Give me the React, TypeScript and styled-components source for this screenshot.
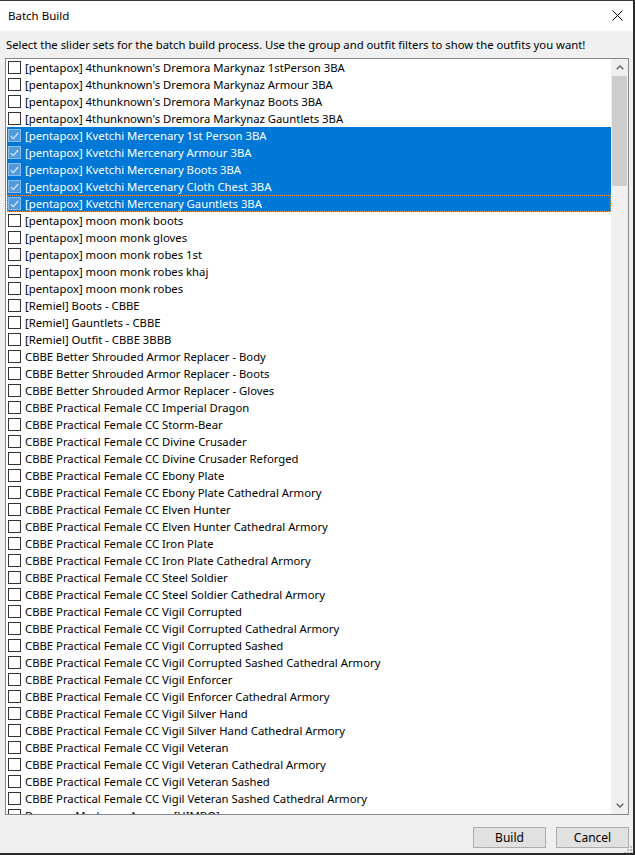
import React from 'react';
import styled, { createGlobalStyle } from 'styled-components';

const GlobalStyle = createGlobalStyle`
  html, body {
    margin: 0;
    padding: 0;
    background: #f0f0f0;
  }
  body {
    font-family: "Segoe UI", "Noto Sans", "Liberation Sans", sans-serif;
    font-size: 11.3px;
    color: #000;
  }
`;

const Window = styled.div`
  position: relative;
  width: 633px;
  height: 852px;
  display: flex;
  flex-direction: column;
  border-top: 1px solid #3a3a3a;
  border-right: 2px solid #2b2b2b;
  border-bottom: 2px solid #2b2b2b;
  background: #f0f0f0;
  overflow: hidden;
`;

const TitleBar = styled.div`
  height: 30px;
  flex: none;
  background: #fff;
  display: flex;
  align-items: center;
  justify-content: space-between;
  padding: 0 10px 0 8px;
`;

const Title = styled.span`
  font-size: 11.5px;
  line-height: 1;
  margin-top: -1px;
`;

const CloseButton = styled.div`
  width: 12px;
  height: 12px;
  display: flex;
  align-items: center;
  justify-content: center;
  margin-top: -2px;
`;

const Body = styled.div`
  flex: 1;
  display: flex;
  flex-direction: column;
  padding: 0 4px 0 5px;
  min-height: 0;
`;

const Description = styled.div`
  height: 27px;
  flex: none;
  display: flex;
  align-items: center;
  padding: 0 0 1px 1px;
  box-sizing: border-box;
  white-space: nowrap;
`;

const ListBox = styled.div`
  height: 755px;
  flex: none;
  display: flex;
  border: 1px solid #828790;
  background: #fff;
  padding: 0 0 0 1px;
`;

const Items = styled.div`
  flex: 1;
  overflow: hidden;
  display: flex;
  flex-direction: column;
`;

const Row = styled.div<{ $selected?: boolean; $focused?: boolean }>`
  height: 17px;
  flex: none;
  display: flex;
  align-items: center;
  gap: 4px;
  padding-left: 1px;
  box-sizing: border-box;
  white-space: nowrap;
  background: ${({ $selected }) => ($selected ? '#0078d7' : 'transparent')};
  color: ${({ $selected }) => ($selected ? '#fff' : '#000')};
  outline: ${({ $focused }) => ($focused ? '1px dotted #f79a3a' : 'none')};
  outline-offset: -1px;
`;

const Box = styled.span<{ $checked?: boolean }>`
  width: 13px;
  height: 13px;
  flex: none;
  box-sizing: border-box;
  border: 1px solid ${({ $checked }) => ($checked ? '#8fbde8' : '#333')};
  background: ${({ $checked }) => ($checked ? '#4f9be0' : '#fff')};
  display: flex;
  align-items: center;
  justify-content: center;
`;

const Label = styled.span`
  line-height: 17px;
`;

const ScrollBar = styled.div`
  width: 17px;
  flex: none;
  background: #f0f0f0;
  display: flex;
  flex-direction: column;
`;

const ArrowButton = styled.div`
  height: 17px;
  flex: none;
  display: flex;
  align-items: center;
  justify-content: center;
`;

const Track = styled.div`
  flex: 1;
  display: flex;
  flex-direction: column;
`;

const Thumb = styled.div`
  height: 110px;
  margin: 0 1px;
  background: #cdcdcd;
`;

const Footer = styled.div`
  flex: 1;
  display: flex;
  justify-content: flex-end;
  align-items: flex-start;
  gap: 10px;
  padding-top: 12px;
`;

const Button = styled.button`
  width: 73px;
  height: 21px;
  box-sizing: border-box;
  border: 1px solid #adadad;
  background: #e1e1e1;
  font-family: inherit;
  font-size: 12px;
  color: #000;
  padding: 0;
`;

const Grip = styled.div`
  position: absolute;
  right: 0;
  bottom: 0;
  width: 10px;
  height: 10px;
`;

const items: string[] = [
  "[pentapox] 4thunknown's Dremora Markynaz 1stPerson 3BA",
  "[pentapox] 4thunknown's Dremora Markynaz Armour 3BA",
  "[pentapox] 4thunknown's Dremora Markynaz Boots 3BA",
  "[pentapox] 4thunknown's Dremora Markynaz Gauntlets 3BA",
  '[pentapox] Kvetchi Mercenary 1st Person 3BA',
  '[pentapox] Kvetchi Mercenary Armour 3BA',
  '[pentapox] Kvetchi Mercenary Boots 3BA',
  '[pentapox] Kvetchi Mercenary Cloth Chest 3BA',
  '[pentapox] Kvetchi Mercenary Gauntlets 3BA',
  '[pentapox] moon monk boots',
  '[pentapox] moon monk gloves',
  '[pentapox] moon monk robes 1st',
  '[pentapox] moon monk robes khaj',
  '[pentapox] moon monk robes',
  '[Remiel] Boots - CBBE',
  '[Remiel] Gauntlets - CBBE',
  '[Remiel] Outfit - CBBE 3BBB',
  'CBBE Better Shrouded Armor Replacer - Body',
  'CBBE Better Shrouded Armor Replacer - Boots',
  'CBBE Better Shrouded Armor Replacer - Gloves',
  'CBBE Practical Female CC Imperial Dragon',
  'CBBE Practical Female CC Storm-Bear',
  'CBBE Practical Female CC Divine Crusader',
  'CBBE Practical Female CC Divine Crusader Reforged',
  'CBBE Practical Female CC Ebony Plate',
  'CBBE Practical Female CC Ebony Plate Cathedral Armory',
  'CBBE Practical Female CC Elven Hunter',
  'CBBE Practical Female CC Elven Hunter Cathedral Armory',
  'CBBE Practical Female CC Iron Plate',
  'CBBE Practical Female CC Iron Plate Cathedral Armory',
  'CBBE Practical Female CC Steel Soldier',
  'CBBE Practical Female CC Steel Soldier Cathedral Armory',
  'CBBE Practical Female CC Vigil Corrupted',
  'CBBE Practical Female CC Vigil Corrupted Cathedral Armory',
  'CBBE Practical Female CC Vigil Corrupted Sashed',
  'CBBE Practical Female CC Vigil Corrupted Sashed Cathedral Armory',
  'CBBE Practical Female CC Vigil Enforcer',
  'CBBE Practical Female CC Vigil Enforcer Cathedral Armory',
  'CBBE Practical Female CC Vigil Silver Hand',
  'CBBE Practical Female CC Vigil Silver Hand Cathedral Armory',
  'CBBE Practical Female CC Vigil Veteran',
  'CBBE Practical Female CC Vigil Veteran Cathedral Armory',
  'CBBE Practical Female CC Vigil Veteran Sashed',
  'CBBE Practical Female CC Vigil Veteran Sashed Cathedral Armory',
  'Dremora Markynaz Armour [HIMBO]',
];

// indices of the checked / highlighted slider sets
const selected = [4, 5, 6, 7, 8];
const focusIndex = 8;

const Check = () => (
  <svg width="9" height="8" viewBox="0 0 9 8">
    <path d="M0.8 4.2 L3.3 6.6 L8.2 1" fill="none" stroke="#d4e6f7" strokeWidth="1.3" />
  </svg>
);

const Chevron: React.FC<{ up?: boolean }> = ({ up }) => (
  <svg width="8" height="5" viewBox="0 0 8 5">
    <path
      d={up ? 'M0.7 4.3 L4 1 L7.3 4.3' : 'M0.7 0.7 L4 4 L7.3 0.7'}
      fill="none"
      stroke="#606060"
      strokeWidth="1.4"
    />
  </svg>
);

const App: React.FC = () => {
  return (
    <>
      <GlobalStyle />
      <Window>
        <TitleBar>
          <Title>Batch Build</Title>
          <CloseButton>
            <svg width="11" height="11" viewBox="0 0 11 11">
              <path d="M0.5 0.5 L10.5 10.5 M10.5 0.5 L0.5 10.5" stroke="#000" strokeWidth="1" />
            </svg>
          </CloseButton>
        </TitleBar>
        <Body>
          <Description>
            Select the slider sets for the batch build process. Use the group and outfit filters to show the outfits you want!
          </Description>
          <ListBox>
            <Items>
              {items.map((name, i) => {
                const isSel = selected.includes(i);
                return (
                  <Row key={name} $selected={isSel} $focused={i === focusIndex}>
                    <Box $checked={isSel}>{isSel && <Check />}</Box>
                    <Label>{name}</Label>
                  </Row>
                );
              })}
            </Items>
            <ScrollBar>
              <ArrowButton>
                <Chevron up />
              </ArrowButton>
              <Track>
                <Thumb />
              </Track>
              <ArrowButton>
                <Chevron />
              </ArrowButton>
            </ScrollBar>
          </ListBox>
          <Footer>
            <Button>Build</Button>
            <Button>Cancel</Button>
          </Footer>
        </Body>
        <Grip>
          <svg width="10" height="10" viewBox="0 0 10 10">
            {[
              [7, 1],
              [7, 4],
              [4, 4],
              [7, 7],
              [4, 7],
              [1, 7],
            ].map(([x, y]) => (
              <rect key={`${x}-${y}`} x={x} y={y} width="2" height="2" fill="#bcbcbc" />
            ))}
          </svg>
        </Grip>
      </Window>
    </>
  );
};

export default App;
